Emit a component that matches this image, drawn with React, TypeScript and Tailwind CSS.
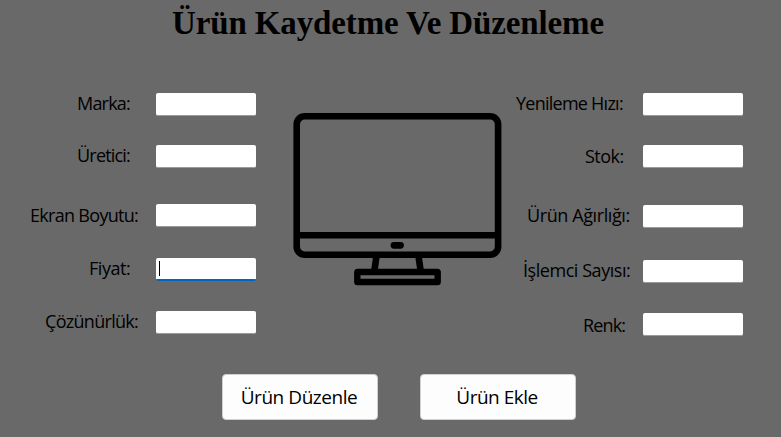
import React from 'react';

type FieldProps = {
  label: string;
  row: string;
  text: string;
  focused?: boolean;
};

function Field({ label, row, text, focused }: FieldProps) {
  return (
    <label className={`flex h-[23px] items-start ${row}`}>
      <span className={`block h-[23px] flex-1 whitespace-nowrap leading-[23px] ${text}`}>{label}</span>
      <span
        className={`flex h-[23px] w-[100px] shrink-0 items-start rounded-[2px] bg-white ${
          focused ? 'border-b-2 border-[#0067c0]' : 'border-b border-[#9a9a9a]'
        }`}
      >
        {focused && <span className="ml-[3px] mt-[3px] h-[15px] w-px bg-black" />}
      </span>
    </label>
  );
}

function Monitor() {
  return (
    <svg className="block h-[174px] w-[210px]" viewBox="0 0 210 174" fill="none" stroke="#000">
      <rect x="3.7" y="4.2" width="201.4" height="138.6" rx="8" strokeWidth="6.6" />
      <path d="M4 123.3H205" strokeWidth="6.6" />
      <path d="M101 133.3H107.5" strokeWidth="6.8" strokeLinecap="round" />
      <path d="M83.5 144L81.5 158M125.5 144L127.5 158" strokeWidth="6.6" />
      <rect x="64.3" y="160" width="80.4" height="10" rx="0.3" strokeWidth="6.4" strokeLinejoin="round" />
    </svg>
  );
}

export default function App() {
  return (
    <main className="flex h-[437px] w-[781px] flex-col overflow-hidden bg-[#696969] font-['Open_Sans','Noto_Sans',sans-serif] text-[18px] text-black">
      <h1 className="h-[93px] whitespace-nowrap pl-[172px] pt-[3px] font-['Liberation_Serif',serif] text-[33px] font-bold leading-[40px] tracking-[-0.13px]">
        Ürün Kaydetme Ve Düzenleme
      </h1>
      <div className="flex h-[281px]">
        <section className="w-[256px]">
          <Field label="Marka:" row="" text="pl-[77px] -mt-px tracking-[-0.8px]" />
          <Field label="Üretici:" row="mt-[29px]" text="pl-[77px] -mt-px tracking-[-0.8px]" />
          <Field label="Ekran Boyutu:" row="mt-[36px]" text="pl-[30px] tracking-[-0.7px]" />
          <Field label="Fiyat:" row="mt-[31px]" text="pl-[89px] -mt-px tracking-[-0.45px]" focused />
          <Field label="Çözünürlük:" row="mt-[30px]" text="pl-[45px] -mt-px tracking-[-0.7px]" />
        </section>
        <div className="w-[256px] pl-[37px] pt-[19px]">
          <Monitor />
        </div>
        <section className="w-[231px]">
          <Field label="Yenileme Hızı:" row="" text="pl-[4px] -mt-px tracking-[-0.75px]" />
          <Field label="Stok:" row="mt-[29px]" text="pl-[73px] tracking-[-0.5px]" />
          <Field label="Ürün Ağırlığı:" row="mt-[37px]" text="pl-[15px] -mt-px tracking-[-0.4px]" />
          <Field label="İşlemci Sayısı:" row="mt-[32px]" text="pl-[11px] -mt-px tracking-[-0.45px]" />
          <Field label="Renk:" row="mt-[30px]" text="pl-[71px] mt-px tracking-[-0.85px]" />
        </section>
      </div>
      <div className="flex gap-[42px] pl-[222px]">
        <button className="h-[46px] w-[156px] rounded-[4px] border border-[#d0d0d0] bg-[#fdfdfd] pr-[2px] text-[19px] tracking-[-0.45px]">
          Ürün Düzenle
        </button>
        <button className="h-[46px] w-[156px] rounded-[4px] border border-[#d0d0d0] bg-[#fdfdfd] pr-[2px] text-[19px] tracking-[-0.5px]">
          Ürün Ekle
        </button>
      </div>
    </main>
  );
}
